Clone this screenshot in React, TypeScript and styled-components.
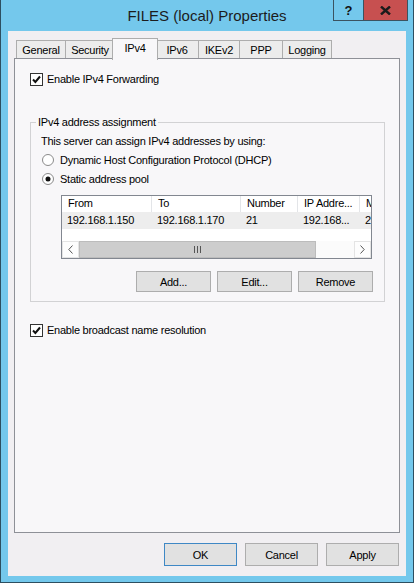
import styled, { createGlobalStyle } from "styled-components";

const GlobalStyle = createGlobalStyle`
    html, body {
        margin: 0;
        padding: 0;
    }
    body {
        font-family: "Liberation Sans", Arial, sans-serif;
        font-size: 11px;
        letter-spacing: -0.25px;
        color: #000;
    }
    * {
        box-sizing: border-box;
    }
`;

const tabs = [
    { label: "General", width: 50 },
    { label: "Security", width: 50 },
    { label: "IPv4", width: 42 },
    { label: "IPv6", width: 44 },
    { label: "IKEv2", width: 42 },
    { label: "PPP", width: 44 },
    { label: "Logging", width: 50 },
];

const columns = ["From", "To", "Number", "IP Addre...", "M"];
const row = ["192.168.1.150", "192.168.1.170", "21", "192.168...", "2"];

function CheckMark() {
    return (
        <svg width="9" height="9" viewBox="0 0 9 9">
            <path d="M1 4.5 L3.4 7 L8 1.5" fill="none" stroke="#111" strokeWidth="2" />
        </svg>
    );
}

function Radio({ on }: { on?: boolean }) {
    return (
        <svg width="12" height="12" viewBox="0 0 12 12">
            <circle cx="6" cy="6" r="5.5" fill="#fff" stroke="#8a8a8a" />
            {on && <circle cx="6" cy="6" r="2.5" fill="#111" />}
        </svg>
    );
}

function App() {
    return (
        <Window>
            <GlobalStyle />
            <TitleBar>
                <span />
                <Title>FILES (local) Properties</Title>
                <CaptionButtons>
                    <HelpButton>?</HelpButton>
                    <CloseButton>
                        <svg width="11" height="9" viewBox="0 0 11 9">
                            <path d="M1 0.5 L10 8.5 M10 0.5 L1 8.5" stroke="#1b1b1b" strokeWidth="2.4" />
                        </svg>
                    </CloseButton>
                </CaptionButtons>
            </TitleBar>
            <Client>
                <TabStrip>
                    {tabs.map((t) => (
                        <Tab key={t.label} $w={t.width} $active={t.label === "IPv4"}>
                            {t.label}
                        </Tab>
                    ))}
                </TabStrip>
                <Panel>
                    <CheckRow>
                        <CheckBox>
                            <CheckMark />
                        </CheckBox>
                        Enable IPv4 Forwarding
                    </CheckRow>
                    <Group>
                        <Legend>IPv4 address assignment</Legend>
                        <Intro>This server can assign IPv4 addresses by using:</Intro>
                        <RadioRow>
                            <Radio />
                            Dynamic Host Configuration Protocol (DHCP)
                        </RadioRow>
                        <RadioRow>
                            <Radio on />
                            Static address pool
                        </RadioRow>
                        <ListView>
                            <ListViewport>
                                <HeaderRow>
                                    {columns.map((c) => (
                                        <HeaderCell key={c}>{c}</HeaderCell>
                                    ))}
                                </HeaderRow>
                                <DataRow>
                                    {row.map((c, i) => (
                                        <DataCell key={i}>{c}</DataCell>
                                    ))}
                                </DataRow>
                            </ListViewport>
                            <ScrollBar>
                                <ScrollArrow>
                                    <svg width="5" height="9" viewBox="0 0 5 9">
                                        <path d="M4.5 0.5 L0.8 4.5 L4.5 8.5" fill="none" stroke="#555" />
                                    </svg>
                                </ScrollArrow>
                                <Track>
                                    <Thumb $w={237}>
                                        <svg width="7" height="7" viewBox="0 0 7 7">
                                            <path d="M0.5 0 V7 M3.5 0 V7 M6.5 0 V7" stroke="#555" />
                                        </svg>
                                    </Thumb>
                                </Track>
                                <ScrollArrow>
                                    <svg width="5" height="9" viewBox="0 0 5 9">
                                        <path d="M0.5 0.5 L4.2 4.5 L0.5 8.5" fill="none" stroke="#555" />
                                    </svg>
                                </ScrollArrow>
                            </ScrollBar>
                        </ListView>
                        <ButtonRow>
                            <Button $w={75} $h={21}>Add...</Button>
                            <Button $w={75} $h={21}>Edit...</Button>
                            <Button $w={75} $h={21}>Remove</Button>
                        </ButtonRow>
                    </Group>
                    <CheckRow $top={21}>
                        <CheckBox>
                            <CheckMark />
                        </CheckBox>
                        Enable broadcast name resolution
                    </CheckRow>
                </Panel>
                <Footer>
                    <Button $w={73} $h={23} $default>OK</Button>
                    <Button $w={73} $h={23}>Cancel</Button>
                    <Button $w={73} $h={23}>Apply</Button>
                </Footer>
            </Client>
        </Window>
    );
}

const Window = styled.div`
    width: 414px;
    height: 583px;
    background-color: #74c8ec;
    border: 1px solid #2d4f60;
    border-top: none;
    display: flex;
    flex-direction: column;
`;
const TitleBar = styled.div`
    height: 31px;
    display: grid;
    grid-template-columns: 80px 1fr 80px;
    align-items: start;
`;
const Title = styled.div`
    font-size: 15px;
    letter-spacing: 0;
    color: #1c1c1c;
    text-align: center;
    line-height: 31px;
`;
const CaptionButtons = styled.div`
    display: flex;
    justify-content: flex-end;
    padding-right: 5px;
`;
const CaptionButton = styled.div`
    height: 21px;
    border: 1px solid #3b5360;
    border-top: none;
    display: flex;
    align-items: center;
    justify-content: center;
`;
const HelpButton = styled(CaptionButton)`
    width: 30px;
    border-right: none;
    font-weight: bold;
    font-size: 13px;
    letter-spacing: 0;
    color: #111;
`;
const CloseButton = styled(CaptionButton)`
    width: 45px;
    background-color: #c75050;
`;
const Client = styled.div`
    flex: 1;
    margin: 0 7px 6px;
    background-color: #f1eff2;
    padding: 7px 6px 0;
    display: flex;
    flex-direction: column;
`;
const TabStrip = styled.div`
    height: 20px;
    padding-left: 2px;
    display: flex;
    align-items: flex-end;
`;
const Tab = styled.div<{ $w: number; $active?: boolean }>`
    width: ${(p) => p.$w + (p.$active ? 4 : 0)}px;
    height: ${(p) => (p.$active ? 22 : 18)}px;
    margin: ${(p) => (p.$active ? "0 -2px -2px -3px" : "0 0 0 -1px")};
    z-index: ${(p) => (p.$active ? 1 : 0)};
    background-color: ${(p) => (p.$active ? "#f8f7f9" : "#ececec")};
    border: 1px solid #adadad;
    border-bottom: none;
    padding-top: 2px;
    text-align: center;
    line-height: 14px;
    &:first-child {
        margin-left: 0;
    }
`;
const Panel = styled.div`
    height: 475px;
    background-color: #f8f7f9;
    border: 1px solid #8e9097;
    padding: 13px 14px 0 15px;
`;
const CheckRow = styled.div<{ $top?: number }>`
    display: flex;
    align-items: center;
    gap: 4px;
    height: 14px;
    margin-top: ${(p) => p.$top ?? 0}px;
`;
const CheckBox = styled.div`
    width: 13px;
    height: 13px;
    border: 1px solid #333;
    background-color: #fff;
    display: flex;
    align-items: center;
    justify-content: center;
`;
const Group = styled.fieldset`
    margin: 29px 0 0;
    padding: 0 11px 9px 10px;
    border: 1px solid #d2d2d4;
    min-width: 0;
`;
const Legend = styled.legend`
    margin-left: -5px;
    padding: 0 2px;
    line-height: 14px;
`;
const Intro = styled.div`
    line-height: 14px;
    margin-top: 5px;
`;
const RadioRow = styled.div`
    display: flex;
    align-items: center;
    gap: 6px;
    height: 14px;
    margin-top: 5px;
    padding-left: 1px;
`;
const ListView = styled.div`
    width: 311px;
    height: 64px;
    margin: 9px 0 0 20px;
    border: 1px solid #828790;
    background-color: #fff;
    display: flex;
    flex-direction: column;
`;
const ListViewport = styled.div`
    flex: 1;
    overflow: hidden;
`;
const HeaderRow = styled.div`
    display: grid;
    grid-template-columns: 90px 89px 57px 62px 40px;
    height: 16px;
`;
const HeaderCell = styled.div`
    border-right: 1px solid #e3e5e8;
    padding-left: 6px;
    line-height: 15px;
    white-space: nowrap;
    overflow: hidden;
`;
const DataRow = styled.div`
    display: grid;
    grid-template-columns: 90px 89px 57px 62px 40px;
    height: 17px;
    background-color: #ededed;
`;
const DataCell = styled.div`
    padding-left: 5px;
    line-height: 17px;
    white-space: nowrap;
    overflow: hidden;
`;
const ScrollBar = styled.div`
    height: 17px;
    display: flex;
    background-color: #f0f0f0;
`;
const ScrollArrow = styled.div`
    width: 17px;
    display: flex;
    align-items: center;
    justify-content: center;
    background-color: #fdfdfd;
    border: 1px solid #e4e4e4;
`;
const Track = styled.div`
    flex: 1;
    display: flex;
    background-color: #fbfbfb;
`;
const Thumb = styled.div<{ $w: number }>`
    width: ${(p) => p.$w}px;
    background-color: #cdcdcd;
    border: 1px solid #bcbcbc;
    display: flex;
    align-items: center;
    justify-content: center;
`;
const ButtonRow = styled.div`
    display: flex;
    justify-content: flex-end;
    gap: 6px;
    margin-top: 12px;
`;
const Button = styled.div<{ $w: number; $h: number; $default?: boolean }>`
    width: ${(p) => p.$w}px;
    height: ${(p) => p.$h}px;
    background-color: #e1e1e1;
    border: 1px solid ${(p) => (p.$default ? "#3f88c5" : "#adadad")};
    display: flex;
    align-items: center;
    justify-content: center;
`;
const Footer = styled.div`
    display: flex;
    justify-content: flex-end;
    gap: 8px;
    padding-right: 1px;
    margin-top: 10px;
`;

export default App;
